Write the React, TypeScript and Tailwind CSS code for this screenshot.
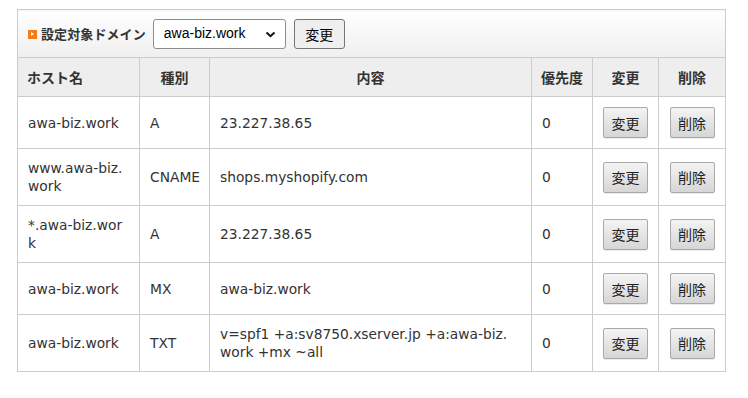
import React from 'react';

type DnsRecord = {
    host: string;
    type: string;
    content: string[];
    priority: string;
};

const records: DnsRecord[] = [
    { host: 'awa-biz.work', type: 'A', content: ['23.227.38.65'], priority: '0' },
    { host: 'www.awa-biz.work', type: 'CNAME', content: ['shops.myshopify.com'], priority: '0' },
    { host: '*.awa-biz.work', type: 'A', content: ['23.227.38.65'], priority: '0' },
    { host: 'awa-biz.work', type: 'MX', content: ['awa-biz.work'], priority: '0' },
    { host: 'awa-biz.work', type: 'TXT', content: ['v=spf1 +a:sv8750.xserver.jp +a:awa-biz.', 'work +mx ~all'], priority: '0' },
];

const jp = "font-['Hiragino_Sans','Noto_Sans_CJK_JP',sans-serif]";

const RowButton: React.FC<{ label: string }> = ({ label }) => (
    <button
        className={`${jp} w-[45px] h-[31px] text-[14px] leading-none text-[#222] border border-[#a9a9a9] rounded-[2px] bg-gradient-to-b from-[#f4f4f4] to-[#d6d6d6] shadow-[0_1px_0_rgba(0,0,0,0.08)] align-middle`}
    >
        {label}
    </button>
);

const HeadCell: React.FC<{ children: React.ReactNode; align?: 'left' | 'center' }> = ({ children, align = 'center' }) => (
    <th
        className={`${align === 'left' ? 'text-left' : 'text-center'} whitespace-nowrap bg-[#eeeeee] border border-[#cccccc] px-[9px] py-[10px] text-[14px] leading-[18px] font-bold text-[#333] ${jp}`}
    >
        {children}
    </th>
);

const cell = "border border-[#cccccc] px-[10px] py-[10px] text-[13.8px] leading-[18px] text-[#333] font-['DejaVu_Sans',Verdana,sans-serif] align-middle";

export default function App() {
    return (
        <div className="w-[748px] h-[398px] bg-white pt-[9px] pl-[17px]">
            <table className="w-[708px] border-collapse table-fixed">
                <colgroup>
                    <col className="w-[122px]" />
                    <col className="w-[70px]" />
                    <col className="w-[322px]" />
                    <col className="w-[61px]" />
                    <col className="w-[66px]" />
                    <col className="w-[67px]" />
                </colgroup>
                <thead>
                    <tr>
                        <th colSpan={6} className="border border-[#cccccc] bg-gradient-to-b from-white to-[#efefef] h-[48px] px-[10px] text-left font-normal">
                            <div className="flex items-center">
                                <span className="w-[9px] h-[9px] bg-[#f47a1a] flex items-center justify-center mr-[4px] mt-[1px]">
                                    <span className="w-0 h-0 border-y-[2.5px] border-y-transparent border-l-[3px] border-l-white"></span>
                                </span>
                                <span className={`${jp} text-[13px] font-bold text-[#333] tracking-[0.1px]`}>設定対象ドメイン</span>
                                <div className="ml-[7px] relative w-[133px] h-[30px] border border-[#8e8e8e] rounded-[3px] bg-white flex items-center">
                                    <span className="pl-[10px] text-[14px] text-black font-['Liberation_Sans',Arial,sans-serif]">awa-biz.work</span>
                                    <svg className="absolute right-[9px] top-[11px]" width="11" height="7" viewBox="0 0 11 7">
                                        <path d="M1.5 1.5 L5.5 5.2 L9.5 1.5" fill="none" stroke="#111" strokeWidth="2" />
                                    </svg>
                                </div>
                                <button className={`${jp} ml-[8px] w-[51px] h-[30px] border border-[#767676] rounded-[3px] bg-[#efefef] text-[14px] text-black leading-none`}>
                                    変更
                                </button>
                            </div>
                        </th>
                    </tr>
                    <tr>
                        <HeadCell align="left">ホスト名</HeadCell>
                        <HeadCell>種別</HeadCell>
                        <HeadCell>内容</HeadCell>
                        <HeadCell>優先度</HeadCell>
                        <HeadCell>変更</HeadCell>
                        <HeadCell>削除</HeadCell>
                    </tr>
                </thead>
                <tbody>
                    {records.map((r, i) => (
                        <tr key={i}>
                            <td className={`${cell} break-all`}>{r.host}</td>
                            <td className={cell}>{r.type}</td>
                            <td className={cell}>
                                {r.content.map((line, j) => (
                                    <div key={j} className="whitespace-nowrap">{line}</div>
                                ))}
                            </td>
                            <td className={cell}>{r.priority}</td>
                            <td className={`${cell} text-center`}><RowButton label="変更" /></td>
                            <td className={`${cell} text-center`}><RowButton label="削除" /></td>
                        </tr>
                    ))}
                </tbody>
            </table>
        </div>
    );
}
